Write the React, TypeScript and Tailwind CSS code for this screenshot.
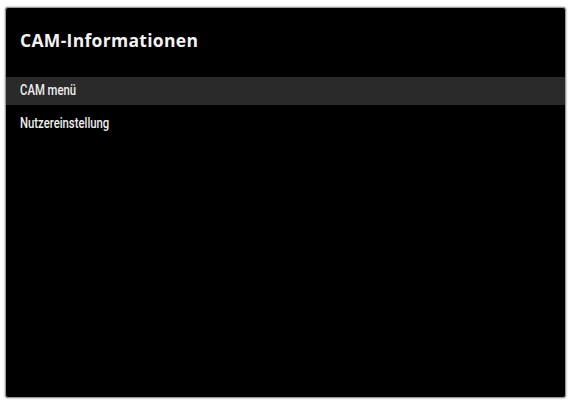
const items = ['CAM menü', 'Nutzereinstellung'];

export default function App() {
  return (
    <div className="h-[401px] w-[571px] bg-white p-[5px] pt-[7px] pb-[3px]">
      <div className="flex h-full flex-col overflow-hidden rounded-[3px] border border-[#9a9a9a] bg-black shadow-[0_0_2px_rgba(0,0,0,0.5)]">
        <h1 className="flex h-[69px] items-center px-[14px] pb-[4px] font-['Open_Sans',sans-serif] text-[17.5px] font-bold tracking-[0.3px] text-[#f2f2f2]">
          CAM-Informationen
        </h1>
        <ul className="font-['Roboto',sans-serif] text-[14.5px] font-medium text-[#eeeeee]">
          {items.map((item, i) => (
            <li
              key={item}
              className={
                i === 0
                  ? 'flex h-[28px] items-center bg-[#2a2a2a] px-[14px]'
                  : 'flex h-[37px] items-center px-[14px]'
              }
            >
              <span className="inline-block origin-left scale-x-[0.78] whitespace-nowrap">{item}</span>
            </li>
          ))}
        </ul>
      </div>
    </div>
  );
}
